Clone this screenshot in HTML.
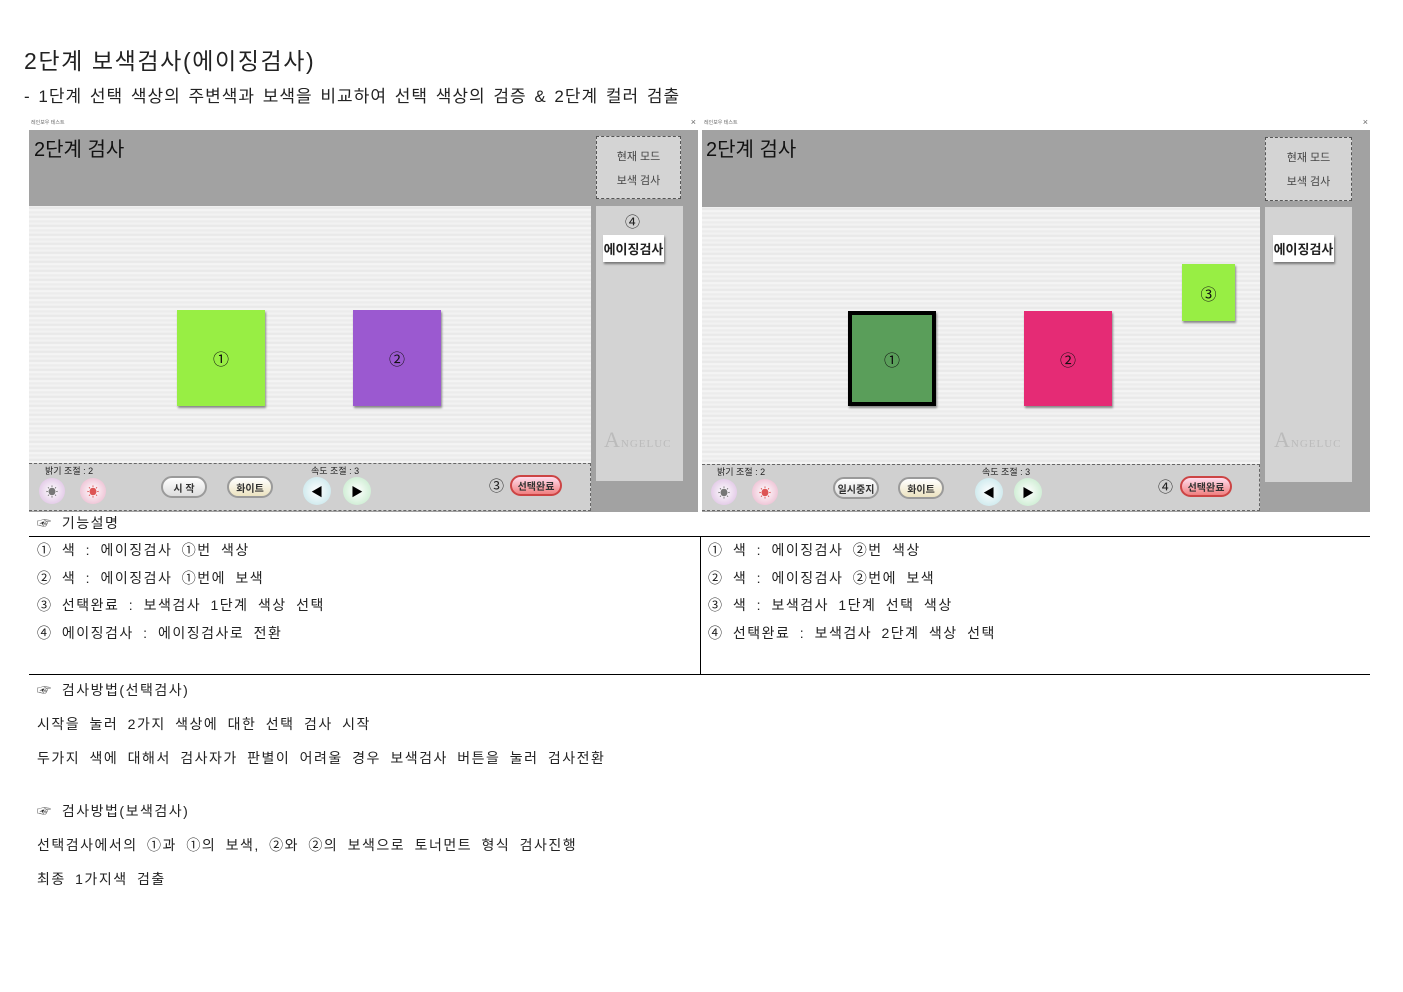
<!DOCTYPE html>
<html><head><meta charset="utf-8"><style>
body{margin:0;width:1403px;height:992px;background:#fff;position:relative;font-family:"Liberation Sans","Noto Sans CJK KR",sans-serif;color:#222;overflow:hidden}
.a{position:absolute}
.t{font-size:14px;white-space:nowrap;letter-spacing:1.5px;word-spacing:4px}
.stripe{background:repeating-linear-gradient(180deg,#f2f2f2 0,#e6e6e6 2px,#f7f7f7 4px,#ebebeb 6px,#f4f4f4 9px)}
.sq{position:absolute;box-shadow:1px 2px 2px #888;display:flex;align-items:center;justify-content:center;font-size:16px;color:#111}
.btn{position:absolute;border-radius:12px;border:2px solid #9a9a9a;background:linear-gradient(#fff,#ddd);font-size:10px;font-weight:bold;display:flex;align-items:center;justify-content:center;color:#333}
.circ{position:absolute;width:26px;height:26px;border-radius:50%;font-size:12px;display:flex;align-items:center;justify-content:center}
</style></head><body>
<div class="a" style="left:24px;top:42px;font-size:23px;color:#222;letter-spacing:1.6px">2단계 보색검사(에이징검사)</div>
<div class="a" style="left:24px;top:82px;font-size:17px;color:#222;letter-spacing:1px;word-spacing:2px;white-space:nowrap">- 1단계 선택 색상의 주변색과 보색을 비교하여 선택 색상의 검증 &amp; 2단계 컬러 검출</div>

<div class="a" style="left:29px;top:117px;width:669px;height:395px">
 <div class="a" style="left:2px;top:2px;font-size:5px;color:#666">레인보우 테스트</div>
 <div class="a" style="right:2px;top:0px;font-size:9px;color:#666">×</div>
 <div class="a" style="left:0;top:13px;width:669px;height:382px;background:#a2a2a2"></div>
 <div class="a" style="left:5px;top:16px;font-size:20px;color:#111">2단계 검사</div>
 <div class="a" style="left:567px;top:19px;width:85px;height:63px;background:#d4d4d4;border:1px dashed #555;text-align:center;font-size:11px;color:#444;line-height:24px;padding-top:8px;box-sizing:border-box">현재 모드<br>보색 검사</div>
 <div class="a stripe" style="left:0;top:89px;width:562px;height:257px"></div>
 <div class="a" style="left:567px;top:89px;width:87px;height:275px;background:#d3d3d3"></div>
 <div class="a" style="left:596px;top:94px;font-size:15px">④</div>
 <div class="a" style="left:574px;top:118px;width:61px;height:27px;background:#fff;box-shadow:1px 2px 2px #777;font-size:13px;font-weight:bold;display:flex;align-items:center;justify-content:center">에이징검사</div>
 <div class="a" style="left:575px;top:310px;font-size:11px;color:#bbb;font-family:'Liberation Serif',serif;letter-spacing:1px"><span style="font-size:22px">A</span>NGELUC</div>
 <div class="a" style="left:0;top:346px;width:561px;height:46px;background:#d0d0d0;border-top:1px dashed #666;border-bottom:1px dashed #666;border-right:1px dashed #666"></div>
 <div class="a" style="left:16px;top:347px;font-size:9px">밝기 조절 : 2</div>
 <div class="a" style="left:282px;top:347px;font-size:9px">속도 조절 : 3</div>
 <div class="circ" style="left:10px;top:361px;background:radial-gradient(#fff,#d9b8df);color:#777">☀</div>
 <div class="circ" style="left:51px;top:361px;background:radial-gradient(#fff,#e9b0c8);color:#d55">☀</div>
 <div class="btn" style="left:132px;top:359px;width:42px;height:18px">시 작</div>
 <div class="btn" style="left:198px;top:359px;width:42px;height:18px;background:linear-gradient(#fff,#ece3c0)">화이트</div>
 <div class="circ" style="left:274px;top:360px;width:28px;height:28px;background:radial-gradient(#fff,#bfe3e8);color:#000">◀</div>
 <div class="circ" style="left:314px;top:360px;width:28px;height:28px;background:radial-gradient(#fff,#bfe8c6);color:#000">▶</div>
 <div class="a" style="left:460px;top:358px;font-size:15px">③</div>
 <div class="btn" style="left:481px;top:358px;width:48px;height:17px;border-color:#c44;background:linear-gradient(#fde,#f08080)">선택완료</div>
 <div class="sq" style="left:148px;top:193px;width:88px;height:96px;background:#98ee44">①</div>
 <div class="sq" style="left:324px;top:193px;width:88px;height:96px;background:#9b59d0">②</div>
</div>

<div class="a" style="left:702px;top:117px;width:668px;height:395px">
 <div class="a" style="left:2px;top:2px;font-size:5px;color:#666">레인보우 테스트</div>
 <div class="a" style="right:2px;top:0px;font-size:9px;color:#666">×</div>
 <div class="a" style="left:0;top:13px;width:668px;height:382px;background:#a2a2a2"></div>
 <div class="a" style="left:4px;top:16px;font-size:20px;color:#111">2단계 검사</div>
 <div class="a" style="left:563px;top:20px;width:87px;height:64px;background:#d4d4d4;border:1px dashed #555;text-align:center;font-size:11px;color:#444;line-height:24px;padding-top:8px;box-sizing:border-box">현재 모드<br>보색 검사</div>
 <div class="a stripe" style="left:0;top:90px;width:558px;height:257px"></div>
 <div class="a" style="left:563px;top:90px;width:87px;height:275px;background:#d3d3d3"></div>
 <div class="a" style="left:571px;top:118px;width:61px;height:27px;background:#fff;box-shadow:1px 2px 2px #777;font-size:13px;font-weight:bold;display:flex;align-items:center;justify-content:center">에이징검사</div>
 <div class="a" style="left:572px;top:310px;font-size:11px;color:#bbb;font-family:'Liberation Serif',serif;letter-spacing:1px"><span style="font-size:22px">A</span>NGELUC</div>
 <div class="a" style="left:0;top:347px;width:557px;height:45px;background:#d0d0d0;border-top:1px dashed #666;border-bottom:1px dashed #666;border-right:1px dashed #666"></div>
 <div class="a" style="left:15px;top:348px;font-size:9px">밝기 조절 : 2</div>
 <div class="a" style="left:280px;top:348px;font-size:9px">속도 조절 : 3</div>
 <div class="circ" style="left:9px;top:362px;background:radial-gradient(#fff,#d9b8df);color:#777">☀</div>
 <div class="circ" style="left:50px;top:362px;background:radial-gradient(#fff,#e9b0c8);color:#d55">☀</div>
 <div class="btn" style="left:131px;top:360px;width:42px;height:18px">일시중지</div>
 <div class="btn" style="left:196px;top:360px;width:42px;height:18px;background:linear-gradient(#fff,#ece3c0)">화이트</div>
 <div class="circ" style="left:273px;top:361px;width:28px;height:28px;background:radial-gradient(#fff,#bfe3e8);color:#000">◀</div>
 <div class="circ" style="left:312px;top:361px;width:28px;height:28px;background:radial-gradient(#fff,#bfe8c6);color:#000">▶</div>
 <div class="a" style="left:456px;top:359px;font-size:15px">④</div>
 <div class="btn" style="left:478px;top:359px;width:48px;height:17px;border-color:#c44;background:linear-gradient(#fde,#f08080)">선택완료</div>
 <div class="sq" style="left:146px;top:194px;width:88px;height:95px;background:#5a9e5a;border:4px solid #000;box-sizing:border-box">①</div>
 <div class="sq" style="left:322px;top:194px;width:88px;height:95px;background:#e52b75">②</div>
 <div class="sq" style="left:480px;top:147px;width:53px;height:57px;background:#98ee44">③</div>
</div>

<div class="a t" style="left:37px;top:513px">☞ 기능설명</div>
<div class="a" style="left:29px;top:536px;width:1341px;height:1px;background:#000"></div>
<div class="a" style="left:29px;top:674px;width:1341px;height:1px;background:#000"></div>
<div class="a" style="left:700px;top:536px;width:1px;height:138px;background:#000"></div>
<div class="a t" style="left:37px;top:537px;line-height:27.7px">① 색 : 에이징검사 ①번 색상<br>② 색 : 에이징검사 ①번에 보색<br>③ 선택완료 : 보색검사 1단계 색상 선택<br>④ 에이징검사 : 에이징검사로 전환</div>
<div class="a t" style="left:708px;top:537px;line-height:27.7px">① 색 : 에이징검사 ②번 색상<br>② 색 : 에이징검사 ②번에 보색<br>③ 색 : 보색검사 1단계 선택 색상<br>④ 선택완료 : 보색검사 2단계 색상 선택</div>
<div class="a t" style="left:37px;top:680px">☞ 검사방법(선택검사)</div>
<div class="a t" style="left:37px;top:714px">시작을 눌러 2가지 색상에 대한 선택 검사 시작</div>
<div class="a t" style="left:37px;top:748px">두가지 색에 대해서 검사자가 판별이 어려울 경우 보색검사 버튼을 눌러 검사전환</div>
<div class="a t" style="left:37px;top:801px">☞ 검사방법(보색검사)</div>
<div class="a t" style="left:37px;top:835px">선택검사에서의 ①과 ①의 보색, ②와 ②의 보색으로 토너먼트 형식 검사진행</div>
<div class="a t" style="left:37px;top:869px">최종 1가지색 검출</div>
</body></html>
